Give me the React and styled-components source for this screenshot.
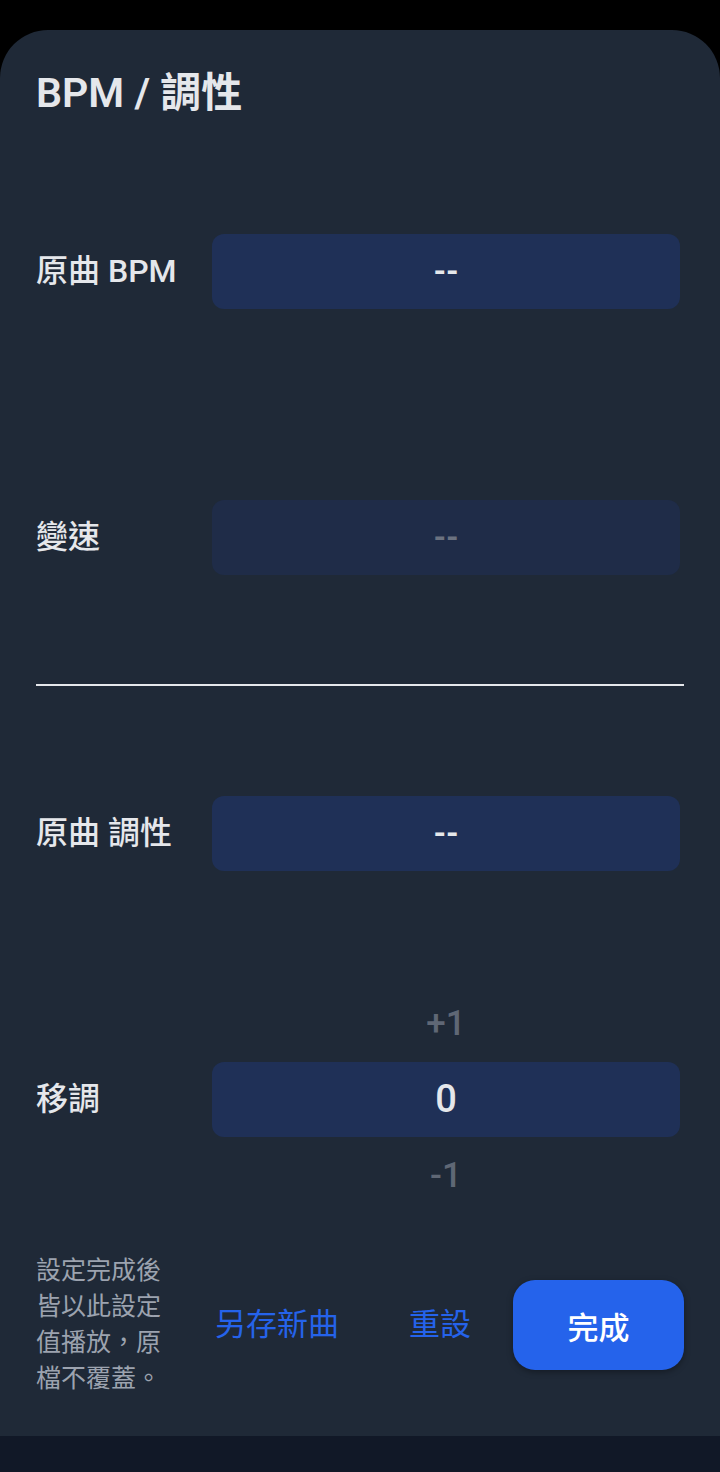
import React, { useState } from "react";
import styled, { createGlobalStyle } from "styled-components";

const GlobalStyle = createGlobalStyle`
  html, body {
    margin: 0;
    padding: 0;
    background: #000;
  }
  * {
    box-sizing: border-box;
  }
`;

const FONT = `Roboto, "Noto Sans CJK TC", "Noto Sans", sans-serif`;

const Page = styled.div`
  display: flex;
  flex-direction: column;
  width: 720px;
  height: 1472px;
  padding-top: 30px;
  background: #000;
  font-family: ${FONT};
`;

const Sheet = styled.div`
  display: flex;
  flex-direction: column;
  height: 1406px;
  padding: 39px 36px 0;
  background: #1f2937;
  border-radius: 48px 48px 0 0;
`;

const BottomBar = styled.div`
  flex: 1;
  background: #111827;
`;

const Title = styled.h1`
  margin: 0 0 21px;
  color: #e5e7eb;
  font-size: 41px;
  font-weight: 600;
  line-height: 48px;
`;

const Row = styled.div`
  display: flex;
  align-items: center;
  height: 266px;
`;

const Label = styled.div`
  flex-shrink: 0;
  width: 176px;
  color: #e5e7eb;
  font-size: 32px;
  font-weight: 500;
  line-height: 40px;
`;

const Picker = styled.div`
  flex: 1;
  display: flex;
  flex-direction: column;
  align-items: stretch;
  margin-right: 4px;
`;

const Field = styled.div`
  display: flex;
  align-items: center;
  justify-content: center;
  height: 75px;
  border-radius: 12px;
  background: ${(p) => (p.$disabled ? "#1f2c48" : "#1f3057")};
  color: ${(p) => (p.$disabled ? "#6b7280" : "#e5e7eb")};
  font-size: ${(p) => (p.$big ? "38px" : "32px")};
  font-weight: ${(p) => (p.$big ? 500 : 700)};
`;

const Neighbour = styled.div`
  display: flex;
  align-items: center;
  justify-content: center;
  height: 77px;
  color: #5f6775;
  font-size: 35px;
  font-weight: 500;
`;

const Divider = styled.div`
  height: 2px;
  margin: 14px 0;
  background: #e5e7eb;
`;

const Footer = styled.div`
  display: flex;
  align-items: center;
  flex: 1;
  padding-bottom: 18px;
`;

const Note = styled.p`
  flex-shrink: 0;
  width: 127px;
  margin: 0;
  color: #9ca3af;
  font-size: 25px;
  line-height: 36px;
`;

const Actions = styled.div`
  flex: 1;
  display: flex;
  align-items: center;
  justify-content: flex-end;
  gap: 22px;
`;

const TextButton = styled.button`
  padding: 0 20px;
  margin-right: ${(p) => p.$space || 0}px;
  border: none;
  background: none;
  color: #2563eb;
  font-family: ${FONT};
  font-size: 31px;
  font-weight: 400;
  line-height: 40px;
  cursor: pointer;
`;

const PrimaryButton = styled.button`
  width: 171px;
  height: 90px;
  border: none;
  border-radius: 22px;
  background: #2563eb;
  color: #fff;
  font-family: ${FONT};
  font-size: 31px;
  font-weight: 500;
  box-shadow: 0 2px 6px rgba(0, 0, 0, 0.35);
  cursor: pointer;
`;

const App = () => {
  const [shift, setShift] = useState(0);
  const fmt = (n) => (n > 0 ? `+${n}` : `${n}`);

  return (
    <Page>
      <GlobalStyle />
      <Sheet>
        <Title>BPM / 調性</Title>

        <Row>
          <Label>原曲 BPM</Label>
          <Picker>
            <Field>--</Field>
          </Picker>
        </Row>

        <Row>
          <Label>變速</Label>
          <Picker>
            <Field $disabled>--</Field>
          </Picker>
        </Row>

        <Divider />

        <Row>
          <Label>原曲 調性</Label>
          <Picker>
            <Field>--</Field>
          </Picker>
        </Row>

        <Row>
          <Label>移調</Label>
          <Picker>
            <Neighbour onClick={() => setShift(shift + 1)}>
              {fmt(shift + 1)}
            </Neighbour>
            <Field $big>{shift}</Field>
            <Neighbour onClick={() => setShift(shift - 1)}>
              {fmt(shift - 1)}
            </Neighbour>
          </Picker>
        </Row>

        <Footer>
          <Note>設定完成後皆以此設定值播放，原檔不覆蓋。</Note>
          <Actions>
            <TextButton $space={8}>另存新曲</TextButton>
            <TextButton onClick={() => setShift(0)}>重設</TextButton>
            <PrimaryButton>完成</PrimaryButton>
          </Actions>
        </Footer>
      </Sheet>
      <BottomBar />
    </Page>
  );
};

export default App;
